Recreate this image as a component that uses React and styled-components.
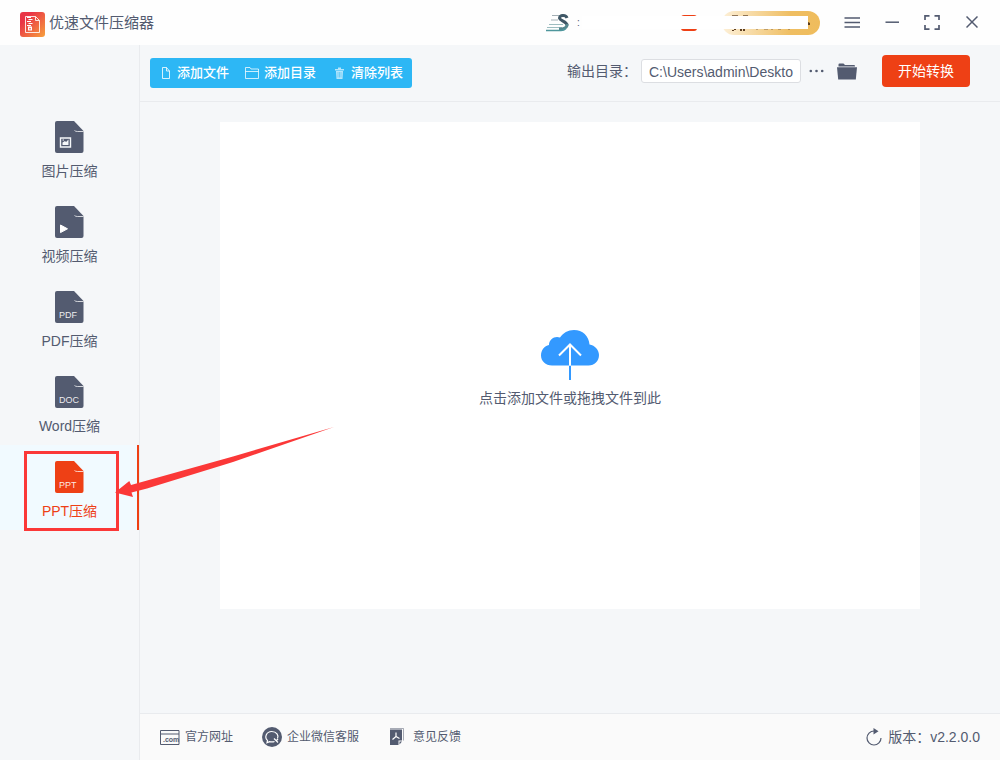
import React from "react";
import styled, { createGlobalStyle } from "styled-components";

const ink = "#535b70";
const accent = "#ee4015";
const line = "#e9ebee";

const GlobalStyle = createGlobalStyle`
  *, *::before, *::after { box-sizing: border-box; }
  body {
    margin: 0;
    color: ${ink};
    background: #f5f7f9;
    font-family: "Liberation Sans", "Noto Sans CJK SC", sans-serif;
    font-size: 14px;
    line-height: 20px;
  }
  button, input { font: inherit; color: inherit; }
  button { border: 0; padding: 0; background: none; cursor: pointer; }
  a { color: inherit; text-decoration: none; }
  svg { display: block; flex: none; }
`;

const Page = styled.div`
  display: flex;
  flex-direction: column;
  min-height: 100vh;
`;

const Header = styled.header`
  display: flex;
  align-items: center;
  height: 45px;
  padding: 0 8px 0 20px;
  background: #fefefe;
`;

const Brand = styled.div`
  display: flex;
  align-items: center;
  gap: 4px;
  padding-top: 4px;
  margin-right: auto;
`;

const Title = styled.h1`
  margin: 0 0 4px;
  font-size: 15px;
  font-weight: 400;
  line-height: 20px;
`;

const Account = styled.div`
  position: relative;
  display: flex;
  align-items: center;
  width: 274px;
  height: 24px;
  margin-right: 12px;
`;

const Dots = styled.span`
  margin: 0 auto 0 7px;
  font-size: 10px;
  line-height: 20px;
`;

const Badge = styled.span`
  width: 16px;
  height: 16px;
  margin-right: 25px;
  border-radius: 3px;
  background: ${accent};
`;

const VipButton = styled.button`
  width: 98px;
  height: 24px;
  border-radius: 12px;
  overflow: hidden;
  background: linear-gradient(90deg, #fdf0d8, #efbe62 70%, #efbc5c);
`;

const Cover = styled.span`
  position: absolute;
  left: 36px;
  right: 12px;
  top: 5px;
  height: 13px;
  background: #fff;
`;

const WindowButton = styled.button`
  display: grid;
  place-items: center;
  width: 40px;
  height: 40px;
`;

const Body = styled.div`
  display: flex;
  flex: 1;
`;

const Sidebar = styled.nav`
  flex: none;
  width: 140px;
  padding-top: 60px;
  border-right: 1px solid ${line};
`;

const NavItem = styled.button`
  position: relative;
  display: flex;
  flex-direction: column;
  align-items: center;
  gap: 8px;
  width: 100%;
  padding: 16px 0 9px;
  color: ${(p) => (p.$active ? accent : ink)};
  background: ${(p) => (p.$active ? "#f1faff" : "transparent")};
  box-shadow: ${(p) => (p.$active ? `inset -2px 0 ${accent}` : "none")};
`;

const Highlight = styled.span`
  position: absolute;
  z-index: 1;
  left: 24px;
  top: 6px;
  width: 95px;
  height: 80px;
  border: 3px solid #fb3838;
  pointer-events: none;
`;

const Arrow = styled.svg`
  position: absolute;
  z-index: 2;
  left: 115px;
  top: -20px;
  pointer-events: none;
`;

const Main = styled.main`
  display: flex;
  flex: 1;
  flex-direction: column;
  min-width: 0;
`;

const Toolbar = styled.div`
  display: flex;
  align-items: center;
  justify-content: space-between;
  height: 57px;
  padding: 0 30px 0 10px;
  border-bottom: 1px solid ${line};
`;

const FileActions = styled.div`
  display: flex;
  align-items: center;
  gap: 16px;
  height: 30px;
  padding: 0 9px 0 11px;
  border-radius: 3px;
  color: #fff;
  background: #2db7f5;
`;

const FileAction = styled.button`
  display: flex;
  align-items: center;
  gap: 5px;
  font-size: 13px;
  font-weight: 500;
`;

const Output = styled.div`
  display: flex;
  align-items: center;
  padding-bottom: 4px;
`;

const PathInput = styled.input`
  width: 160px;
  height: 24px;
  margin: 0 8px 0 4px;
  padding: 1px 6px 0 7px;
  border: 1px solid #dcdee2;
  border-radius: 3px;
  background: #fff;
`;

const FolderButton = styled.button`
  margin: 0 25px 0 13px;
`;

const StartButton = styled.button`
  width: 88px;
  height: 32px;
  border-radius: 4px;
  color: #fff;
  background: ${accent};
`;

const DropZone = styled.button`
  display: flex;
  flex: 1;
  flex-direction: column;
  align-items: center;
  justify-content: center;
  gap: 8px;
  margin: 20px 80px 104px;
  padding-top: 7px;
  background: #fff;
`;

const Footer = styled.footer`
  display: flex;
  align-items: center;
  gap: 29px;
  height: 47px;
  padding: 0 20px;
  border-top: 1px solid ${line};
  background: #fafafa;
`;

const FooterLink = styled.a`
  display: flex;
  align-items: center;
  gap: 5px;
  font-size: 12px;
`;

const Version = styled.div`
  display: flex;
  align-items: center;
  gap: 6px;
  margin-left: auto;
`;

function LogoIcon() {
  return (
    <svg width="25" height="25" viewBox="0 0 25 25" fill="none">
      <defs>
        <linearGradient id="logo" x1="0" y1="0" x2="1" y2="1">
          <stop offset=".25" stopColor="#e93546" />
          <stop offset="1" stopColor="#f7a13d" />
        </linearGradient>
      </defs>
      <rect width="25" height="25" rx="3" fill="url(#logo)" />
      <path d="M5.500 4.500h10l4 4v12h-14zM15.500 4.500v4h4" stroke="#fff" strokeOpacity=".85" />
      <path d="M7 5.500h4M8.500 7.500h4M7 9.500h4M8.500 11.500h4M7 13.500h4" stroke="#fff" strokeWidth="1.100" />
      <path d="M8 14.500h4v4h-4z" fill="#fff" />
      <path d="M9 16.800h2" stroke="#ec4a42" />
    </svg>
  );
}

function SpeedIcon() {
  return (
    <svg width="24" height="20" viewBox="0 0 24 20" fill="none">
      <path d="M6 2.500h10M5 7h7" stroke="#a3afb5" strokeWidth="1.200" />
      <path d="M3 11.500h14M1 14.500h15" stroke="#9dbdc0" strokeWidth="1.200" />
      <path d="M21 5c-1-3.500-8-3-7.500.3.400 2.500 7.500 3 7.500 7.200" stroke="#3f5766" strokeWidth="3" />
      <path d="M21 11c.5 4-3.500 5-8 5" stroke="#55878f" strokeWidth="3" />
      <path d="M0 17.500h15q3 0 5-2" stroke="#4e969c" strokeWidth="1.400" />
    </svg>
  );
}

function VipMarks() {
  return (
    <svg width="98" height="24" viewBox="0 0 98 24" fill="#4b2c12">
      <path d="M10 4h6v1h-6zM21 4h5v1h-5z" opacity=".6" />
      <path d="M12 18h2v1h-2zM10 19h2v1h-2zM18 18h2v2h-2zM21 18h2v2h-2zM86 11l2 1v2h-2z" opacity=".9" />
      <path d="M34 18h2v1h-2zM42 18h4v1h-4zM49 18h2v1h-2zM56 18h3v1h-3zM66 18h2v1h-2z" opacity=".3" />
    </svg>
  );
}

function DocIcon({ kind }) {
  return (
    <svg width="29" height="32" viewBox="0 0 29 32" fill="currentColor">
      <path d="M2 0h17l9.500 10v20a2 2 0 0 1-2 2h-24.500a2 2 0 0 1-2-2v-28a2 2 0 0 1 2-2z" />
      <path d="M19.500 9.500q1 1 3 1h6" stroke="#fff" strokeOpacity=".75" fill="none" />
      {kind === "image" && (
        <g stroke="#f5f7f9" fill="none">
          <path d="M5.500 17h10v9h-10z" strokeWidth="1.400" />
          <path d="M7.500 24v-2.500l2.500-1.500 1 1 2.500-2.500v5.500z" fill="#f5f7f9" stroke="none" />
          <path d="M7.500 19h1.500" />
        </g>
      )}
      {kind === "video" && <path d="M5.500 19l7 3.800-7 3.800z" fill="#fff" stroke="#fff" strokeLinejoin="round" />}
      {kind.length === 3 && (
        <text x="4" y="27" fontSize="9" fill="#fff" fillOpacity=".9">
          {kind}
        </text>
      )}
    </svg>
  );
}

const navItems = [
  { label: "图片压缩", kind: "image" },
  { label: "视频压缩", kind: "video" },
  { label: "PDF压缩", kind: "PDF" },
  { label: "Word压缩", kind: "DOC" },
  { label: "PPT压缩", kind: "PPT", active: true },
];

export default function App() {
  return (
    <Page>
      <GlobalStyle />
      <Header>
        <Brand>
          <LogoIcon />
          <Title>优速文件压缩器</Title>
        </Brand>
        <Account>
          <SpeedIcon />
          <Dots>:</Dots>
          <Badge />
          <VipButton aria-label="VIP">
            <VipMarks />
          </VipButton>
          <Cover />
        </Account>
        <WindowButton aria-label="菜单">
          <svg width="16" height="12" viewBox="0 0 16 12" stroke={ink} strokeWidth="1.500">
            <path d="M.5 1h15.500M.5 5.500h15.500M.5 10h15.500" />
          </svg>
        </WindowButton>
        <WindowButton aria-label="最小化">
          <svg width="14" height="4" viewBox="0 0 14 4" stroke={ink} strokeWidth="1.500">
            <path d="M.5 1.200h13.500" />
          </svg>
        </WindowButton>
        <WindowButton aria-label="最大化">
          <svg width="16" height="16" viewBox="0 0 16 16" fill="none" stroke={ink} strokeWidth="1.700">
            <path d="M1 5v-4.200h4.500M10.500.8h4.500v4.200M15 10v4.200h-4.500M5.500 14.200h-4.500v-4.200" />
          </svg>
        </WindowButton>
        <WindowButton aria-label="关闭">
          <svg width="12" height="14" viewBox="0 0 12 14" stroke={ink} strokeWidth="1.500">
            <path d="M.5.5l11 11M11.500.5l-11 11" />
          </svg>
        </WindowButton>
      </Header>
      <Body>
        <Sidebar>
          {navItems.map((item) => (
            <NavItem key={item.label} $active={item.active}>
              <DocIcon kind={item.kind} />
              <span>{item.label}</span>
              {item.active && (
                <>
                  <Highlight />
                  <Arrow width="220" height="74" viewBox="0 0 220 74" fill="#fb3838">
                    <path d="M0 67.500L14.300 56l1.700 4L118 31.500 219 2 118 37 32 63.500l-15.500 4 1.500 4.500z" />
                  </Arrow>
                </>
              )}
            </NavItem>
          ))}
        </Sidebar>
        <Main>
          <Toolbar>
            <FileActions>
              <FileAction>
                <svg width="11" height="12" viewBox="0 0 11 12" fill="none" stroke="#fff" strokeOpacity=".8">
                  <path d="M1.500.5h4l3 3.500v7.500h-7zM5.500.5v3.500h3" />
                </svg>
                添加文件
              </FileAction>
              <FileAction>
                <svg width="14" height="12" viewBox="0 0 14 12" fill="none" stroke="#fff" strokeOpacity=".75">
                  <path d="M.5 11.500v-11h4.500l1 1.500h7.500v9.500zM.5 4.500h13" />
                </svg>
                添加目录
              </FileAction>
              <FileAction>
                <svg width="14" height="12" viewBox="0 0 14 12" fill="#fff" fillOpacity=".65">
                  <path d="M3 2h3v-1.500h3v1.500h3v1.500h-9zM4 4h7l-.5 8h-6z" />
                  <path d="M6 5v5.500M7.500 5v5.500M9 5v5.500" stroke="#2db7f5" strokeWidth=".5" />
                </svg>
                清除列表
              </FileAction>
            </FileActions>
            <Output>
              <label htmlFor="path">输出目录：</label>
              <PathInput id="path" type="text" defaultValue="C:\Users\admin\Deskto" />
              <button aria-label="浏览">
                <svg width="15" height="4" viewBox="0 0 15 4" fill={ink}>
                  <circle cx="1.800" cy="2" r="1.300" />
                  <circle cx="7.500" cy="2" r="1.300" />
                  <circle cx="13.200" cy="2" r="1.300" />
                </svg>
              </button>
              <FolderButton aria-label="打开目录">
                <svg width="20" height="17" viewBox="0 0 20 17" fill={ink}>
                  <path d="M1.500 3.500v-2q0-1 1-1h4l1.500 1.500h9q1 0 1 1v.500z" />
                  <path d="M0 4.300h20l-1.200 12.200h-17.600z" />
                </svg>
              </FolderButton>
              <StartButton>开始转换</StartButton>
            </Output>
          </Toolbar>
          <DropZone>
            <svg width="58" height="50" viewBox="0 0 58 50" fill="none">
              <path d="M11 35.500C4.500 35.500 0 31 0 25.500 0 20 3.500 16 8 15c0-6 6-9.500 11-7.500C22 3 27 0 33 0c8.500 0 15 6 15.500 14.500C54 15.500 58 20 58 25c0 6-4.500 10.500-10.500 10.500z" fill="#3399ff" />
              <path d="M29 15v20.500M18 25.500l11-11 11 11" stroke="#fff" strokeWidth="2" />
              <path d="M29 36v14" stroke="#3399ff" strokeWidth="2" />
            </svg>
            <span>点击添加文件或拖拽文件到此</span>
          </DropZone>
          <Footer>
            <FooterLink href="#site">
              <svg width="20" height="15" viewBox="0 0 20 15" fill="none" stroke={ink}>
                <path d="M.5.5h18.500v14h-18.500zM.5 4h18.500" />
                <text x="3" y="12" fontSize="7" fontWeight="700" fill={ink} stroke="none">.com</text>
              </svg>
              官方网址
            </FooterLink>
            <FooterLink href="#service">
              <svg width="20" height="20" viewBox="0 0 20 20" fill="none">
                <circle cx="10" cy="10" r="10" fill={ink} />
                <path d="M12.500 14.500q-2 .8-5 .2l-2.500 1 .5-2.300C2 10 4.500 4.500 9.700 4.500c5 0 7.300 4 5.800 7" stroke="#fff" strokeWidth="1.200" />
                <path d="M12 11.500l4 4M16 12l-2 2" stroke="#fff" strokeWidth="1.200" />
              </svg>
              企业微信客服
            </FooterLink>
            <FooterLink href="#feedback">
              <svg width="20" height="18" viewBox="0 0 20 18" fill={ink}>
                <path d="M2 1.500h12v11h-3.500v4.500h-8.500zM11.500 13.500h2.500l-2.500 3z" />
                <path d="M2 .5h13.500v12" fill="none" stroke={ink} strokeOpacity=".5" />
                <path d="M8 4.500v4M8 8.500l-3.500 3M8 8.500l3.500 2" stroke="#fff" strokeWidth="1.200" />
              </svg>
              意见反馈
            </FooterLink>
            <Version>
              <svg width="16" height="18" viewBox="0 0 16 18" fill="none">
                <path d="M8 3a7 7 0 1 0 7 7" stroke={ink} strokeWidth="1.200" />
                <path d="M7.500 0l5 3.200-5 3.200z" fill={ink} />
              </svg>
              <span>版本：v2.2.0.0</span>
            </Version>
          </Footer>
        </Main>
      </Body>
    </Page>
  );
}
